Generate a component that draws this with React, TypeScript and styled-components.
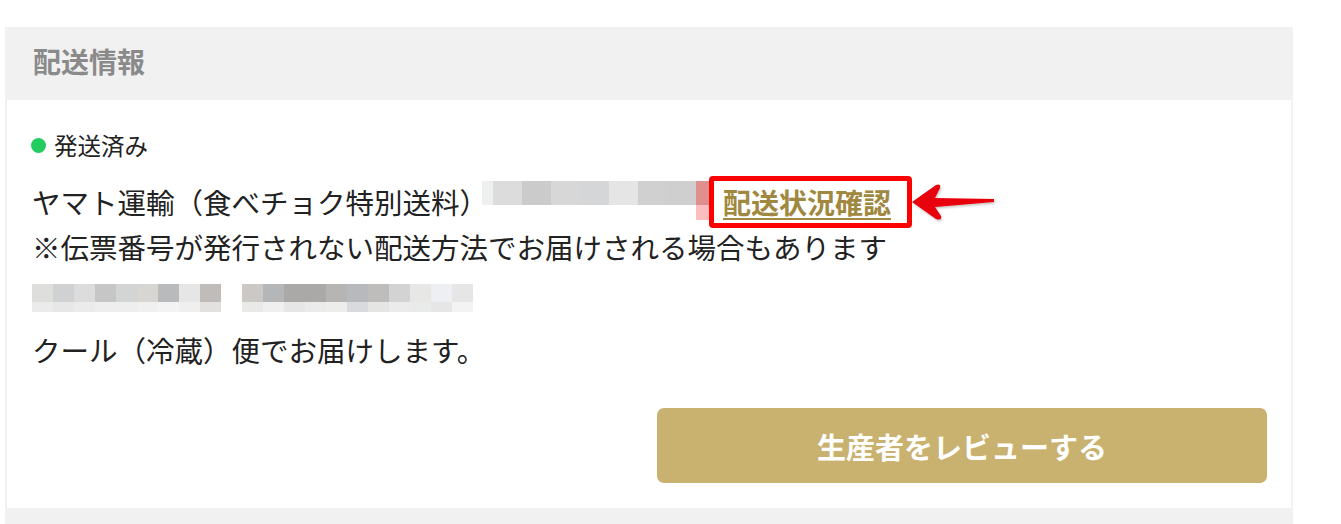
import React from 'react';
import styled, { createGlobalStyle } from 'styled-components';

const GlobalStyle = createGlobalStyle`
  html, body {
    margin: 0;
    padding: 0;
    background: #ffffff;
    font-family: "Noto Sans CJK JP", "Noto Sans", sans-serif;
    color: #222222;
  }
`;

const mosaicTop = ['#eef0ef', '#dcdcdc', '#cbcbcb', '#d7d7d7', '#d5d6d8', '#e5e5e5', '#d0d0d0', '#cfcfcf'];
const mosaicTopWidths = [11, 29, 29, 29, 29, 29, 29, 29];

const mosaicA = {
  top: ['#dededd', '#d0d1d3', '#dcdcdc', '#c6c6c6', '#d3d5d4', '#d7d6d2', '#b9babc', '#e6e6e6', '#bfbcba'],
  bottom: ['#ebebeb', '#e7e7e7', '#ebebeb', '#eeeeee', '#edeeed', '#f0f0f0', '#f3f3f3', '#efefef', '#e2e1df'],
};

const mosaicB = {
  top: ['#cbc8c6', '#b5b6b8', '#aaa9a7', '#aaa9a7', '#b6b5b3', '#b8b9bc', '#bfbdbb', '#d3d3d3', '#e7e7e5', '#eeeff3', '#e6e6e6'],
  bottom: ['#e9e9e8', '#efefef', '#e6e6e6', '#ebebeb', '#ededeb', '#d9dadd', '#e5e5e3', '#ebebeb', '#e9ebea', '#e6e6e6', '#f3f3f3'],
};

const App: React.FC = () => {
  return (
    <>
      <GlobalStyle />
      <Page>
        <Card>
          <CardHeader>配送情報</CardHeader>
          <CardBody>
            <Status>
              <StatusDot />
              <span>発送済み</span>
            </Status>
            <CarrierLine>
              <span>ヤマト運輸（食べチョク特別送料）</span>
              <TrackingMosaic>
                {mosaicTop.map((c, i) => (
                  <MosaicCell key={i} $color={c} $w={mosaicTopWidths[i]} $h={24} />
                ))}
                <PinkTail>
                  <MosaicCell $color="#e08f8f" $w={14} $h={24} />
                  <MosaicCell $color="#fbbdbd" $w={14} $h={15} />
                </PinkTail>
              </TrackingMosaic>
              <HighlightBox>
                <TrackLink href="#">配送状況確認</TrackLink>
                <Arrow viewBox="0 0 90 45" width="90" height="45">
                  <defs>
                    <filter id="sh" x="-10%" y="-20%" width="130%" height="150%">
                      <feDropShadow dx="1" dy="1.5" stdDeviation="1" floodColor="#000" floodOpacity="0.25" />
                    </filter>
                  </defs>
                  <path
                    d="M3 22 L27 5 Q32 3 31 8 L26 18 L85 19 L85 22 L26 27 L32 36 Q33 41 27 39 Z"
                    fill="#e8050b"
                    filter="url(#sh)"
                  />
                </Arrow>
              </HighlightBox>
            </CarrierLine>
            <TextLine>※伝票番号が発行されない配送方法でお届けされる場合もあります</TextLine>
            <AddressMosaic>
              <MosaicGroup>
                <MosaicRow>
                  {mosaicA.top.map((c, i) => <MosaicCell key={i} $color={c} $w={21} $h={18} />)}
                </MosaicRow>
                <MosaicRow>
                  {mosaicA.bottom.map((c, i) => <MosaicCell key={i} $color={c} $w={21} $h={10} />)}
                </MosaicRow>
              </MosaicGroup>
              <MosaicGroup>
                <MosaicRow>
                  {mosaicB.top.map((c, i) => <MosaicCell key={i} $color={c} $w={21} $h={18} />)}
                </MosaicRow>
                <MosaicRow>
                  {mosaicB.bottom.map((c, i) => <MosaicCell key={i} $color={c} $w={21} $h={10} />)}
                </MosaicRow>
              </MosaicGroup>
            </AddressMosaic>
            <CoolLine>クール（冷蔵）便でお届けします。</CoolLine>
            <ButtonRow>
              <ReviewButton type="button">生産者をレビューする</ReviewButton>
            </ButtonRow>
          </CardBody>
        </Card>
      </Page>
    </>
  );
};

const Page = styled.div`
  padding: 27px 48px 0 5px;
`;

const Card = styled.section`
  background-color: #f1f1f1;
  padding: 0 2px 30px;
`;

const CardHeader = styled.h2`
  margin: 0;
  height: 73px;
  box-sizing: border-box;
  display: flex;
  align-items: center;
  padding: 0 0 5px 26px;
  font-size: 28px;
  font-weight: 700;
  color: #8a8a8a;
`;

const CardBody = styled.div`
  background-color: #ffffff;
  padding: 30px 24px 25px 25px;
  display: flex;
  flex-direction: column;
`;

const Status = styled.div`
  display: flex;
  align-items: center;
  gap: 8px;
  height: 30px;
  font-size: 23.5px;
  line-height: 30px;
  color: #222222;
`;

const StatusDot = styled.span`
  width: 15px;
  height: 15px;
  border-radius: 50%;
  background-color: #22cc5e;
  margin-left: -1px;
`;

const CarrierLine = styled.div`
  margin-top: 19px;
  display: flex;
  align-items: center;
  height: 45px;
  font-size: 28.5px;
  line-height: 45px;
  white-space: nowrap;
`;

const TextLine = styled.div`
  font-size: 28.5px;
  line-height: 45px;
  white-space: nowrap;
`;

const CoolLine = styled(TextLine)`
  margin-top: 15px;
`;

const TrackingMosaic = styled.div`
  display: flex;
  align-items: flex-start;
  align-self: flex-start;
  margin: 2px 0 0 -6px;
`;

const PinkTail = styled.div`
  display: flex;
  flex-direction: column;
`;

const MosaicCell = styled.span<{ $color: string; $w: number; $h: number }>`
  display: block;
  width: ${({ $w }) => $w}px;
  height: ${({ $h }) => $h}px;
  background-color: ${({ $color }) => $color};
`;

const HighlightBox = styled.div`
  position: relative;
  display: flex;
  align-items: center;
  height: 42px;
  margin-left: -1px;
  padding: 0 16px 0 9px;
  border: 5px solid #ff0000;
  border-radius: 4px;
  line-height: 42px;
`;

const TrackLink = styled.a`
  font-size: 28px;
  font-weight: 700;
  color: #a08840;
  text-decoration: underline;
  text-decoration-thickness: 2px;
  text-underline-offset: 4px;
`;

const Arrow = styled.svg`
  position: absolute;
  left: 100%;
  top: 50%;
  margin-top: -22px;
  margin-left: 2px;
`;

const AddressMosaic = styled.div`
  display: flex;
  gap: 21px;
  margin: 15px 0 0 0;
`;

const MosaicGroup = styled.div`
  display: flex;
  flex-direction: column;
`;

const MosaicRow = styled.div`
  display: flex;
`;

const ButtonRow = styled.div`
  display: flex;
  justify-content: flex-end;
  margin-top: 36px;
`;

const ReviewButton = styled.button`
  width: 610px;
  height: 75px;
  border: none;
  border-radius: 7px;
  background-color: #c9b26f;
  color: #ffffff;
  font-family: "Noto Sans CJK JP", "Noto Sans", sans-serif;
  font-size: 29px;
  font-weight: 700;
  cursor: pointer;
`;

export default App;
